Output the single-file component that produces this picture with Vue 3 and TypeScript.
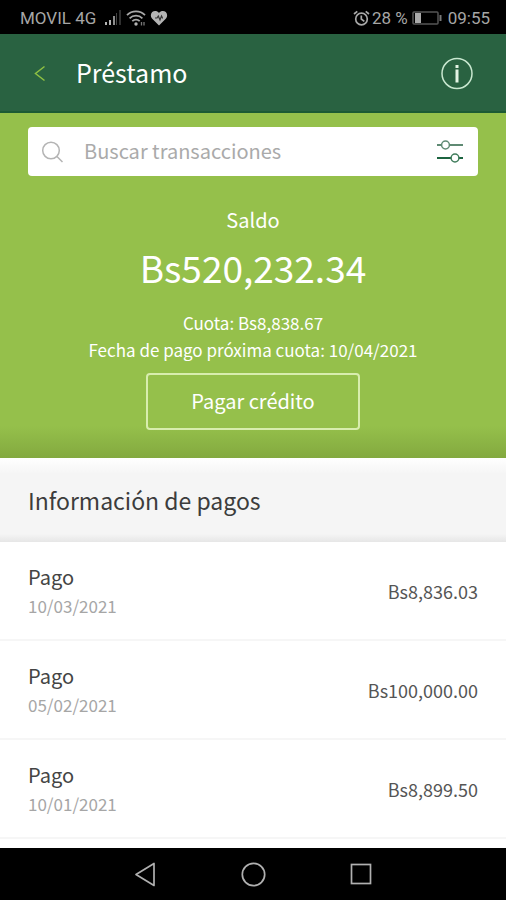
<script setup lang="ts">
import { ref } from 'vue'

interface Payment {
  label: string
  date: string
  amount: string
}

const query = ref('')

const payments: Payment[] = [
  { label: 'Pago', date: '10/03/2021', amount: 'Bs8,836.03' },
  { label: 'Pago', date: '05/02/2021', amount: 'Bs100,000.00' },
  { label: 'Pago', date: '10/01/2021', amount: 'Bs8,899.50' },
]
</script>

<template>
  <div class="screen">
    <div class="status">
      <div class="status-group">
        <span class="carrier">MOVIL 4G</span>
        <svg class="signal" width="18" height="16" viewBox="0 0 18 16" aria-hidden="true">
          <rect x="1" y="12" width="2" height="3" fill="#b4b4b4" />
          <rect x="5" y="10" width="2" height="5" fill="#b4b4b4" />
          <rect x="9" y="6" width="2" height="9" fill="#8c8c8c" />
          <rect x="12" y="3" width="1" height="12" fill="#444" />
          <rect x="15" y="0" width="2" height="15" fill="#303030" />
        </svg>
        <svg width="20" height="16" viewBox="0 0 20 16" fill="none" stroke="#a8a8a8" stroke-width="1.8" aria-hidden="true">
          <path d="M1 5.2C6 .2 14 .2 19 5.2M3.600 8.300C7.200 4.800 12.800 4.800 16.400 8.300M6.300 11.200C8.400 9.200 11.600 9.200 13.700 11.200" />
          <circle cx="10" cy="14" r="1.700" fill="#b4b4b4" stroke="none" />
          <path d="M15.500 12v3.500M18 12v3.500" stroke="#777" stroke-width="1.300" />
        </svg>
        <svg width="18" height="16" viewBox="0 0 18 16" aria-hidden="true">
          <path d="M9 15.500 2 8.500C.4 6.800.5 3.700 2.200 2.100 4.100.4 7.200.7 9 3 10.800.7 13.900.4 15.800 2.100c1.700 1.600 1.800 4.700.2 6.400z" fill="#b4b4b4" />
          <path d="M5 8h2l1.300-2 1.700 4 1.500-4 1 2H13" fill="none" stroke="#333" stroke-width="1.200" />
        </svg>
      </div>
      <div class="status-group right">
        <svg width="17" height="16" viewBox="0 0 17 16" fill="none" stroke="#a8a8a8" stroke-width="1.700" aria-hidden="true">
          <circle cx="8.500" cy="9" r="5.800" />
          <path d="M8.300 5.500V9l3 2.300M1 4l3.300-2.700M16 4l-3.300-2.700" />
        </svg>
        <span>28 %</span>
        <svg class="battery" width="30" height="16" viewBox="0 0 30 16" aria-hidden="true">
          <rect x="1" y="2" width="25" height="12" rx="1" fill="none" stroke="#555" stroke-width="1.500" />
          <rect x="3" y="3" width="6" height="10" fill="#aaa" />
          <rect x="27.500" y="5" width="2" height="6" fill="#777" />
        </svg>
        <span>09:55</span>
      </div>
    </div>

    <header class="bar">
      <button class="icon-button" type="button" aria-label="Volver">
        <svg width="24" height="24" viewBox="0 0 24 24" fill="none" stroke="#8fc043" stroke-width="1.500" aria-hidden="true">
          <path d="M16.500 5.500 7.500 12.500l9 7" />
        </svg>
      </button>
      <h1>Préstamo</h1>
      <button class="icon-button" type="button" aria-label="Información">
        <svg width="34" height="34" viewBox="0 0 34 34" aria-hidden="true">
          <circle cx="17" cy="17.500" r="15" fill="none" stroke="#c9e8d0" stroke-width="1.500" />
          <rect x="15.500" y="9" width="3" height="3" fill="#e3f4e4" />
          <rect x="15.500" y="13.500" width="3" height="13" fill="#e3f4e4" />
        </svg>
      </button>
    </header>

    <main>
      <section class="summary">
        <form class="search" role="search" @submit.prevent>
          <label for="search" aria-label="Buscar transacciones">
            <svg width="24" height="24" viewBox="0 0 24 24" fill="none" stroke="#b4b4b4" stroke-width="1.500" aria-hidden="true">
              <circle cx="11" cy="10.500" r="8.300" />
              <path d="m17 16.500 5.500 5.500" />
            </svg>
          </label>
          <input id="search" v-model="query" type="text" placeholder="Buscar transacciones" />
          <button class="icon-button" type="button" aria-label="Filtrar">
            <svg width="28" height="24" viewBox="0 0 28 24" aria-hidden="true">
              <path d="M1 5h26" stroke="#5f8a73" stroke-width="2" />
              <path d="M1 18h26" stroke="#1c6440" stroke-width="2" />
              <circle cx="9.500" cy="5" r="3.900" fill="#fff" stroke="#5f8a73" stroke-width="1.500" />
              <circle cx="19" cy="18" r="3.900" fill="#fff" stroke="#3f7c5b" stroke-width="1.500" />
            </svg>
          </button>
        </form>
        <p class="caption">Saldo</p>
        <p class="balance">Bs520,232.34</p>
        <p class="detail">Cuota: Bs8,838.67</p>
        <p class="detail">Fecha de pago próxima cuota: 10/04/2021</p>
        <button class="pay" type="button">Pagar crédito</button>
      </section>

      <h2>Información de pagos</h2>
      <ul class="payments">
        <li v-for="payment in payments" :key="payment.date">
          <div>
            <p class="label">{{ payment.label }}</p>
            <p class="date">{{ payment.date }}</p>
          </div>
          <span class="amount">{{ payment.amount }}</span>
        </li>
      </ul>
    </main>

    <nav class="system">
      <button class="icon-button" type="button" aria-label="Atrás">
        <svg width="26" height="26" viewBox="0 0 26 26" fill="none" stroke="#b0b0b0" stroke-width="1.700" stroke-linejoin="round" aria-hidden="true">
          <path d="M22 2.500v22L4 13.500z" />
        </svg>
      </button>
      <button class="icon-button" type="button" aria-label="Inicio">
        <svg width="26" height="26" viewBox="0 0 26 26" fill="none" stroke="#b0b0b0" stroke-width="1.700" aria-hidden="true">
          <circle cx="13.500" cy="13.500" r="11.200" />
        </svg>
      </button>
      <button class="icon-button" type="button" aria-label="Recientes">
        <svg width="26" height="26" viewBox="0 0 26 26" fill="none" stroke="#b0b0b0" stroke-width="1.700" aria-hidden="true">
          <rect x="3.500" y="3.500" width="19" height="19" />
        </svg>
      </button>
    </nav>
  </div>
</template>

<style>
body {
  background: #fff;
}
</style>

<style scoped>
.screen {
  display: flex;
  flex-direction: column;
  min-height: 100vh;
  font-family: "Noto Sans CJK SC", "Noto Sans", sans-serif;
  color: #444;
}

h1,
h2,
p,
ul {
  margin: 0;
  padding: 0;
  font-weight: 400;
}

button,
input {
  font: inherit;
  border: 0;
  padding: 0;
  background: none;
}

svg {
  display: block;
}

.status {
  display: flex;
  justify-content: space-between;
  align-items: center;
  height: 34px;
  padding: 2px 16px 0 20px;
  box-sizing: border-box;
  background: #000;
  color: #a6a6a6;
  font: 17px/20px Roboto, sans-serif;
}

.status-group {
  display: flex;
  align-items: center;
  gap: 4px;
}

.status-group.right {
  gap: 2px;
}

.signal {
  margin-left: 4px;
}

.battery {
  margin: 0 4px 0 2px;
}

.bar {
  display: flex;
  align-items: center;
  height: 79px;
  padding: 0 32px 0 28px;
  box-sizing: border-box;
  background: #296241;
  border-bottom: 2px solid #1c5a34;
}

.bar h1 {
  flex: 1;
  margin-left: 24px;
  color: #fff;
  font-size: 25px;
  line-height: 36px;
  padding-bottom: 2px;
}

.icon-button {
  display: flex;
}

.summary {
  display: flex;
  flex-direction: column;
  align-items: center;
  padding: 14px 28px 28px;
  background: linear-gradient(to top, #83a93f, #95c04b 32px);
  color: #fff;
  text-align: center;
}

.search {
  display: flex;
  align-items: center;
  align-self: stretch;
  gap: 20px;
  height: 49px;
  margin-bottom: 28px;
  padding: 0 14px 0 12px;
  border-radius: 4px;
  background: #fff;
}

.search input {
  flex: 1;
  min-width: 0;
  padding-bottom: 2px;
  color: #444;
  font-size: 20px;
  line-height: 28px;
  outline: 0;
}

.search input::placeholder {
  color: #aaa;
  opacity: 1;
}

.caption {
  font-size: 20px;
  line-height: 32px;
}

.balance {
  margin: 7px 0 18px;
  font-size: 37px;
  line-height: 48px;
}

.detail {
  font-size: 17px;
  line-height: 27px;
}

.pay {
  width: 214px;
  height: 57px;
  margin-top: 10px;
  padding-bottom: 3px;
  border: 2px solid #d8edae;
  border-radius: 4px;
  color: #fff;
  font-size: 20px;
}

h2 {
  padding: 24px 28px;
  background: linear-gradient(#fff, #f5f5f5 16px, #f5f5f5 76px, #e6e6e6);
  color: #3c3c3c;
  font-size: 23px;
  line-height: 36px;
}

.payments {
  list-style: none;
}

.payments li {
  display: flex;
  justify-content: space-between;
  align-items: center;
  padding: 20px 28px 19px;
  border-bottom: 2px solid #f6f6f6;
}

.label {
  color: #444;
  font-size: 20px;
  line-height: 30px;
}

.date {
  color: #a6a6a6;
  font-size: 17px;
  line-height: 28px;
}

.amount {
  color: #555;
  font-size: 18px;
}

.system {
  display: flex;
  justify-content: space-between;
  align-items: center;
  height: 52px;
  margin-top: auto;
  padding: 0 132px;
  box-sizing: border-box;
  background: #000;
}
</style>
